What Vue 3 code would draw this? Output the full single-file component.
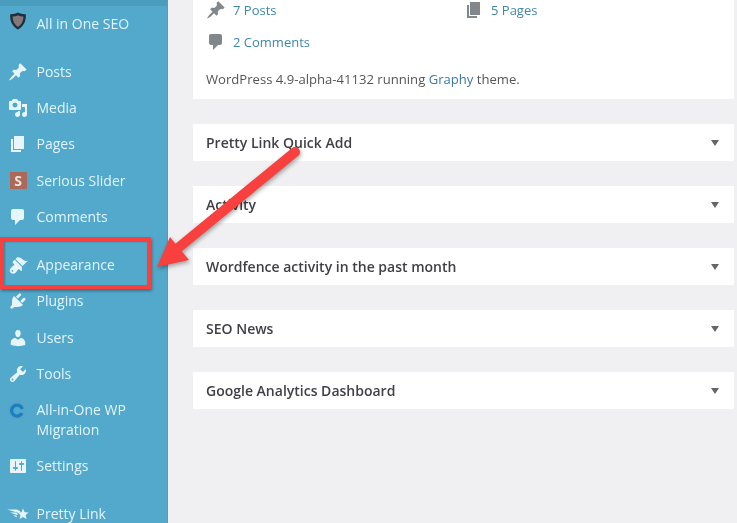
<template>
  <div class="page">
    <aside class="sidebar">
      <div class="top-strip"></div>
      <ul v-for="(group, g) in menu" :key="g" class="group">
        <li v-for="item in group" :key="item.label" class="item" :class="{ tall: item.tall }">
          <span class="icon">
            <svg v-if="item.path" viewBox="0 0 20 20" width="20" height="20"><path :d="item.path" fill="#e6f6fc" /></svg>
            <svg v-else-if="item.label === 'All in One SEO'" class="shield" viewBox="0 0 20 20" width="20" height="20">
              <path d="M10 1.500c2.300 1.300 4.800 1.800 7.800 1.700.5 6.800-2.100 12-7.800 15.300C4.300 15.200 1.700 10 2.200 3.200c3 .1 5.500-.4 7.800-1.700z" fill="#1d2f3a" />
              <path d="M10 4.200c1.800 1 3.500 1.300 5.500 1.400-.1 4.700-2 8.200-5.500 10.400C6.500 13.800 4.600 10.300 4.500 5.600c2 -.1 3.700-.4 5.500-1.400z" fill="#84787a" />
            </svg>
            <span v-else-if="item.label === 'Serious Slider'" class="slider-tile">S</span>
            <svg v-else-if="item.label === 'All-in-One WP Migration'" class="swirl" viewBox="0 0 20 20" width="20" height="20">
              <circle cx="10" cy="10" r="8.500" fill="none" stroke="#7d8fae" stroke-width="1" opacity=".4" />
              <path d="M15 12.500A5.500 5.500 0 1 1 15.300 8.500" fill="none" stroke="#1b7fc4" stroke-width="3.400" />
            </svg>
            <svg v-else class="wings" viewBox="0 0 20 20" width="20" height="20">
              <path d="M-1 5.500h10l3.500 2-1.500 1.500zM2 8.500h6l2 1.500-1 1zM5 11.500h3l1 .5-.5 1.200z" fill="#e6f6fc" />
              <path d="M15 4.500l1.600 3.700 4 .3-3 2.600 1 3.900-3.600-2.100-3.500 2.100 1-3.900-3-2.600 4-.3z" fill="#e6f6fc" />
            </svg>
          </span>
          <span class="label">{{ item.label }}</span>
        </li>
      </ul>
    </aside>

    <main class="content">
      <section class="card glance">
        <div class="stats">
          <a class="stat"><svg viewBox="0 0 20 20" width="20" height="20"><path :d="icons.pin" /></svg>7 Posts</a>
          <a class="stat"><svg viewBox="0 0 20 20" width="20" height="20"><path :d="icons.page" /></svg>5 Pages</a>
          <a class="stat"><svg viewBox="0 0 20 20" width="20" height="20"><path :d="icons.comment" /></svg>2 Comments</a>
        </div>
        <p class="version">WordPress 4.9-alpha-41132 running <a>Graphy</a> theme.</p>
      </section>
      <section v-for="title in boxes" :key="title" class="card box">
        <h2>{{ title }}</h2>
        <span class="caret"></span>
      </section>
    </main>

    <div class="highlight"></div>
    <svg class="arrow" viewBox="0 0 737 523" width="737" height="523">
      <line x1="295" y1="152" x2="178" y2="248" stroke="#f8403f" stroke-width="10" stroke-linecap="round" />
      <polygon points="170,237 189,260 157,267" fill="#f8403f" />
    </svg>
  </div>
</template>

<script setup>
const icons = {
  pin: "M10.44 3.02l1.82-1.82 6.36 6.35-1.83 1.82c-1.05-.68-2.48-.57-3.41.36l-.75.75c-.92.93-1.04 2.35-.35 3.41l-1.83 1.82-2.41-2.41-2.8 2.79c-.42.42-3.38 2.71-3.8 2.29s1.86-3.39 2.28-3.81l2.79-2.79L4.1 9.36l1.83-1.82c1.05.69 2.48.57 3.4-.36l.75-.75c.93-.92 1.05-2.35.36-3.41z",
  media: "M13 11V4c0-.55-.45-1-1-1h-1.67L9 1H5L3.67 3H2c-.55 0-1 .45-1 1v7c0 .55.45 1 1 1h10c.55 0 1-.45 1-1zM7 4.500c1.380 0 2.500 1.120 2.500 2.500S8.380 9.500 7 9.500 4.500 8.380 4.500 7 5.620 4.500 7 4.500zM14 6h5v10.500c0 1.380-1.120 2.500-2.500 2.500S14 17.880 14 16.500s1.120-2.500 2.500-2.500c.17 0 .34.02.5.05V9h-3V6zm-4 8.050V13h2v3.500c0 1.380-1.120 2.500-2.500 2.500S7 17.880 7 16.500 8.120 14 9.500 14c.17 0 .34.02.5.05z",
  page: "M6 15V2h10v13H6zm-1 1h8v2H3V5h2v11z",
  comment: "M5 2h9c1.100 0 2 .9 2 2v7c0 1.100-.9 2-2 2h-2l-5 5v-5H5c-1.100 0-2-.9-2-2V4c0-1.100.9-2 2-2z",
  brush: "M14.480 11.060L7.410 3.990l1.500-1.500c.5-.56 2.300-.47 3.510.32 1.210.8 1.430 1.280 2.910 2.100 1.180.64 2.450 1.260 4.450.85zM13.770 11.770L6.700 4.700 4.930 6.470c-.39.39-.39 1.020 0 1.410l1.060 1.060c.39.39.39 1.030 0 1.420-.6.6-1.430 1.110-2.210 1.690-.35.26-.7.53-1.010.84-1.430 1.430-1.400 3.520-.04 4.880 1.350 1.350 3.450 1.390 4.880-.04.31-.31.58-.66.84-1.010.58-.78 1.090-1.610 1.690-2.210.39-.39 1.030-.39 1.420 0l1.060 1.060c.39.39 1.020.39 1.410 0zM3.700 15.200a1 1 0 0 1 1.400 1.400 1 1 0 0 1-1.400-1.400z",
  plugin: "M13.110 4.360L9.870 7.600 8 5.730l3.240-3.240c.35-.34 1.050-.2 1.560.32.52.51.66 1.210.31 1.550zm-8 1.770l.91-1.120 9.010 9.010-1.190.84c-.71.71-2.630 1.160-3.820 1.160H6.140L4.900 17.260c-.59.59-1.540.59-2.120 0-.59-.58-.59-1.530 0-2.120l1.240-1.240v-3.880c0-1.130.4-3.190 1.090-3.890zm7.260 3.970l3.240-3.240c.34-.35 1.040-.21 1.550.31.52.51.66 1.210.31 1.550l-3.240 3.250z",
  user: "M10 9.250c-2.270 0-2.730-3.440-2.730-3.440C7 4.020 7.820 2 9.970 2c2.160 0 2.980 2.020 2.710 3.810 0 0-.41 3.440-2.680 3.440zm0 2.570L12.720 10c2.390 0 4.520 2.330 4.520 4.530v2.490s-3.650 1.130-7.240 1.130c-3.650 0-7.240-1.130-7.240-1.130v-2.490c0-2.250 1.940-4.480 4.470-4.480z",
  tool: "M16.680 9.770c-1.340 1.340-3.300 1.670-4.950.99l-5.410 6.520c-.99.99-2.590.99-3.580 0s-.99-2.590 0-3.570l6.520-5.420c-.68-1.650-.35-3.610.99-4.950 1.280-1.280 3.120-1.620 4.720-1.060l-2.890 2.890 2.820 2.820 2.860-2.870c.53 1.580.18 3.390-1.080 4.670zM3.810 16.210c.4.39 1.040.39 1.430 0 .4-.4.4-1.040 0-1.430-.39-.4-1.030-.4-1.430 0-.39.39-.39 1.030 0 1.430z",
  settings: "M18 16V4c0-.55-.45-1-1-1H3c-.55 0-1 .45-1 1v12c0 .55.45 1 1 1h14c.55 0 1-.45 1-1zM8 11h1c.55 0 1 .45 1 1s-.45 1-1 1H8v1.500c0 .28-.22.5-.5.5s-.5-.22-.5-.5V13H6c-.55 0-1-.45-1-1s.45-1 1-1h1V5.500c0-.28.22-.5.5-.5s.5.22.5.5V11zm5-2h-1c-.55 0-1-.45-1-1s.45-1 1-1h1V5.500c0-.28.22-.5.5-.5s.5.22.5.5V7h1c.55 0 1 .45 1 1s-.45 1-1 1h-1v5.500c0 .28-.22.5-.5.5s-.5-.22-.5-.5V9z",
};

const menu = [
  [{ label: "All in One SEO" }],
  [
    { label: "Posts", path: icons.pin },
    { label: "Media", path: icons.media },
    { label: "Pages", path: icons.page },
    { label: "Serious Slider" },
    { label: "Comments", path: icons.comment },
  ],
  [
    { label: "Appearance", path: icons.brush },
    { label: "Plugins", path: icons.plugin },
    { label: "Users", path: icons.user },
    { label: "Tools", path: icons.tool },
    { label: "All-in-One WP Migration", tall: true },
    { label: "Settings", path: icons.settings },
  ],
  [{ label: "Pretty Link" }],
];

const boxes = [
  "Pretty Link Quick Add",
  "Activity",
  "Wordfence activity in the past month",
  "SEO News",
  "Google Analytics Dashboard",
];
</script>

<style>
html,
body {
  margin: 0;
  overflow: hidden;
}
</style>

<style scoped>
.page {
  position: relative;
  display: flex;
  width: 737px;
  height: 523px;
  overflow: hidden;
  background: #f0f0f2;
  font-family: "Open Sans", "Noto Sans", sans-serif;
  filter: blur(0.35px);
}

.sidebar {
  flex: none;
  width: 168px;
  height: 523px;
  background: #52a9cb;
  border-right: 1px solid #4ba0c2;
  box-sizing: border-box;
  color: #e3f4fb;
  font-size: 14px;
}

.top-strip {
  height: 5.5px;
  background: #4a9dbd;
}

.group {
  list-style: none;
  margin: 0 0 12px;
  padding: 0;
}

.item {
  display: flex;
  align-items: center;
  gap: 8.5px;
  height: 36.25px;
  padding-left: 8px;
}

.item.tall {
  height: 56px;
}

.icon {
  display: flex;
  flex: none;
  align-items: center;
  justify-content: center;
  width: 20px;
  height: 20px;
}

.icon svg {
  overflow: visible;
}

.shield {
  transform: translateY(-3px);
}

.swirl {
  transform: translate(-1px, -9.5px);
}

.label {
  line-height: 20px;
  width: 110px;
}

.slider-tile {
  flex: none;
  width: 17px;
  height: 17px;
  background: #ac6959;
  color: #f0e2dc;
  font-size: 14px;
  font-weight: 700;
  line-height: 17px;
  text-align: center;
}

.content {
  display: flex;
  flex-direction: column;
  gap: 25px;
  width: 541px;
  margin-left: 25px;
}

.card {
  background: #fff;
  color: #444;
}

.glance {
  box-sizing: border-box;
  height: 99px;
  padding: 0 13px;
  flex: none;
}

.stats {
  display: grid;
  grid-template-columns: 258px 1fr;
  grid-auto-rows: 32px;
  margin-top: -6px;
}

.stat {
  display: flex;
  align-items: center;
  gap: 7px;
  color: #3f87a8;
  font-size: 13px;
}

.stat svg {
  fill: #82878c;
}

.version {
  margin: 11px 0 0;
  font-size: 13.1px;
  line-height: 20px;
  color: #555;
}

.version a {
  color: #3b78a8;
}

.box {
  display: flex;
  flex: none;
  align-items: center;
  justify-content: space-between;
  box-sizing: border-box;
  height: 37px;
  padding: 0 15px 0 13px;
}

.box h2 {
  margin: 0;
  font-size: 14px;
  font-weight: 600;
  color: #3f3f46;
}

.caret {
  width: 0;
  height: 0;
  border-left: 4px solid transparent;
  border-right: 4px solid transparent;
  border-top: 6px solid #666;
}

.highlight {
  position: absolute;
  left: 0;
  top: 237px;
  width: 151px;
  height: 52px;
  box-sizing: border-box;
  border: 4px solid #f8403f;
  box-shadow: 1px 2px 3px rgba(0, 0, 0, 0.35), inset 1px 1px 2px rgba(0, 0, 0, 0.25);
}

.arrow {
  position: absolute;
  left: 0;
  top: 0;
  filter: drop-shadow(1px 2px 2px rgba(0, 0, 0, 0.35));
}
</style>
